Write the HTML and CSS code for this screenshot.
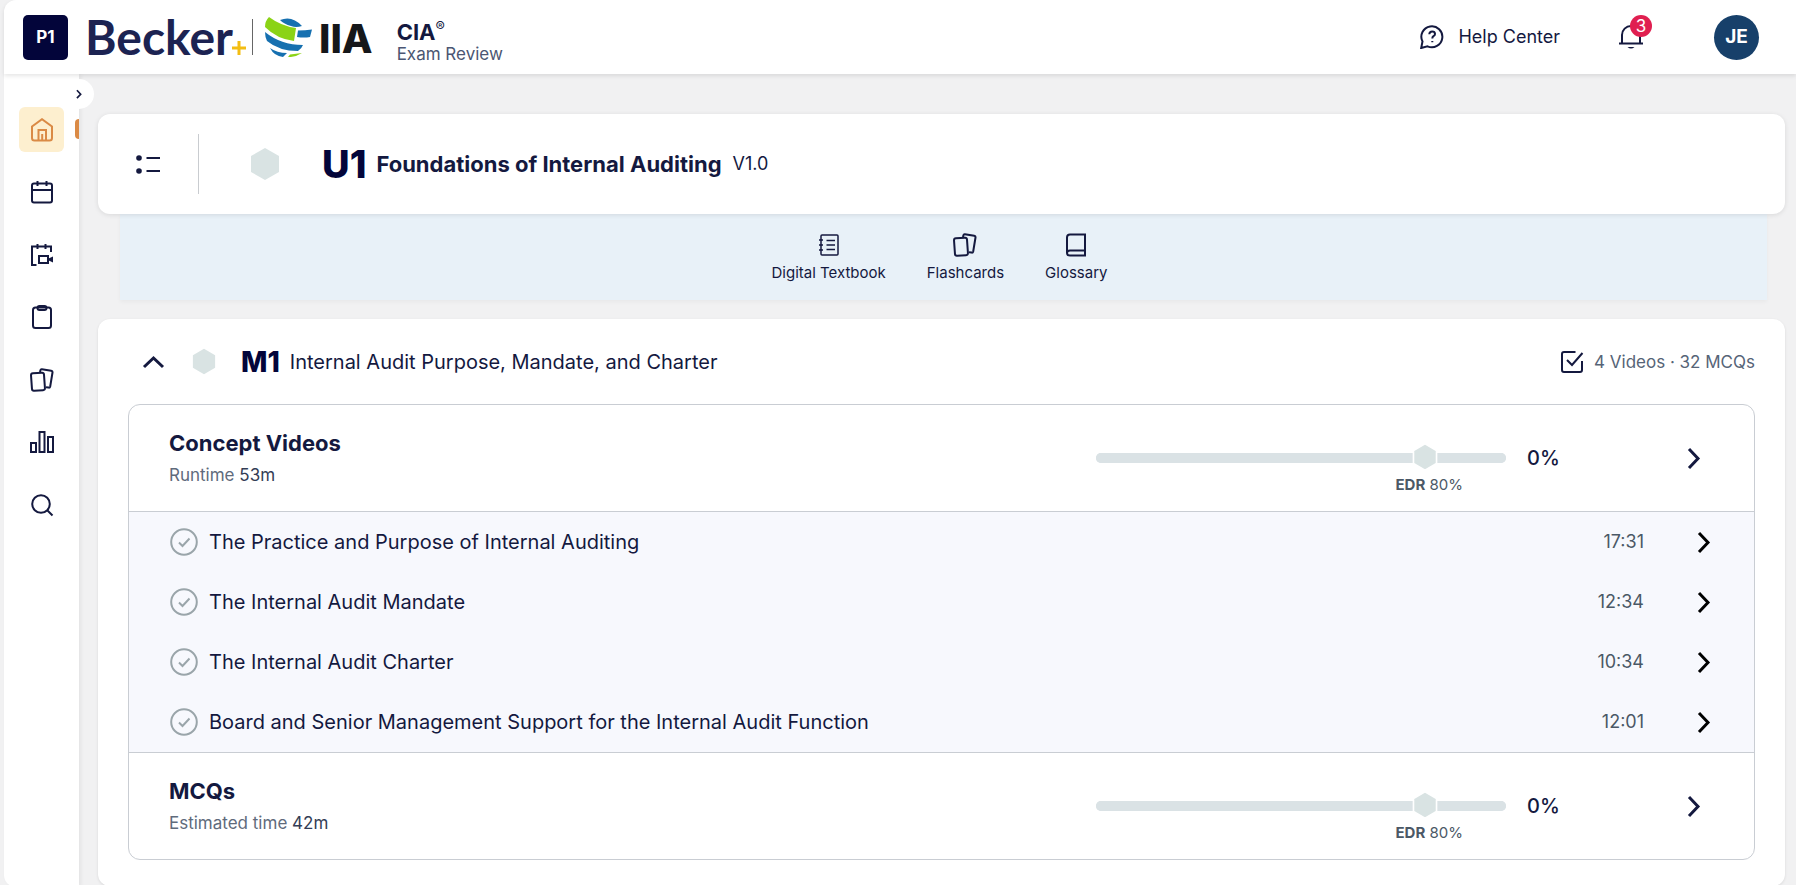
FILE: index.html
```html
<!DOCTYPE html>
<html lang="en">
<head>
  <meta charset="UTF-8">
  <title>U1 Foundations of Internal Auditing</title>
  <meta name="viewport" content="width=device-width, initial-scale=1.0">
  <link rel="stylesheet" href="styles.css">
</head>
<body>
  <!-- shared icons -->
  <svg class="sprite" aria-hidden="true">
    <symbol id="chevron" viewBox="0 0 24 24"><path d="M7 3l9 9.500-9 9.500"/></symbol>
    <symbol id="hex" viewBox="0 0 30 34"><path d="M15 1l14 8v16l-14 8-14-8V9z"/></symbol>
    <symbol id="cards" viewBox="0 0 24 24"><rect x="1.500" y="5" width="13" height="17.500" rx="2" transform="rotate(-4 8 14)"/><path d="M10 4.500l.4-2.200q.3-1.200 1.500-1l9.300 1.500q1.500.3 1.300 1.700l-2.300 14q-.3 1.300-1.600 1.100l-2.600-.3"/></symbol>
    <symbol id="check" viewBox="0 0 28 28"><circle cx="14" cy="14" r="12.800"/><path d="M9 14.500l3.500 3.500 7-7.500"/></symbol>
  </svg>

  <header class="topbar">
    <span class="part">P1</span>
    <a class="becker" href="#">Becker<svg class="spark" viewBox="0 0 14 14"><path d="M7 0v14M0 7h14"/></svg></a>
    <a class="iia" href="#">
      <svg class="globe" viewBox="0 0 48 40" aria-hidden="true">
        <path fill="#1670b0" d="M16 3Q28-2 38 9Q32 11 27 9Q20 7 16 3z"/>
        <path fill="#8bd316" d="M5 0Q17 9 32 11L30 24Q13 22 1 10Q1 4 5 0z"/>
        <path fill="#1670b0" d="M34 13.500Q41 13.500 48 12.500L46 20Q40 21 33 20z"/>
        <path fill="#1670b0" d="M1 15Q17 28 39 28Q38 31 34 34Q15 34 3 24Q1 20 1 15z"/>
        <path fill="#1670b0" d="M6 31Q13 36 23 36L19 40Q10 39 6 31z"/>
        <path fill="#8bd316" d="M26 37.500l12-1.500q-7 4.500-14 4z"/>
      </svg>
      <span>IIA</span>
    </a>
    <div class="exam">
      <strong>CIA<sup>®</sup></strong>
      <span>Exam Review</span>
    </div>
    <a class="help" href="#">
      <svg class="icon" viewBox="0 0 24 24"><path d="M1.200 23l1.300-6.500A10.500 10.500 0 1 1 7.500 21.300z"/><path d="M9.300 9.200q.2-2.700 2.900-2.700t2.800 2.400q0 1.500-1.500 2.300-1.200.8-1.200 2.300M12.300 16v1.200"/></svg>
      Help Center
    </a>
    <button class="bell" aria-label="Notifications">
      <svg class="icon" viewBox="0 0 26 26"><path d="M1 19.500h24M4 19.500V11a9 9 0 0 1 18 0v8.500"/><path d="M9.500 23h7q-3.500 3-7 0z" fill="#14193f" stroke="none"/></svg>
      <span class="badge">3</span>
    </button>
    <button class="avatar">JE</button>
  </header>

  <div class="shell">
    <nav class="sidebar">
      <button class="toggle" aria-label="Expand menu"><svg class="icon" viewBox="0 0 24 24"><use href="#chevron"/></svg></button>
      <div class="menu">
        <a class="active" href="#" aria-label="Home"><svg class="icon" viewBox="0 0 24 24"><path d="M2 8.500L12 1.200l10 7.300V20q0 2.500-2.500 2.500h-15Q2 22.500 2 20z"/><path d="M8.500 22v-10h7.500v10M12.200 16v6"/></svg></a>
        <a href="#" aria-label="Calendar"><svg class="icon" viewBox="0 0 24 24"><rect x="2" y="3.500" width="20" height="19" rx="2"/><path d="M2 10h20M7.500 1v5M16.500 1v5"/></svg></a>
        <a href="#" aria-label="Live classes"><svg class="icon" viewBox="0 0 24 24"><path d="M6.500 22H2V3.500h19V9M7.500 1v5M15.500 1v5"/><path d="M9 13h9v7H9z"/><path d="M19 16.500l3-1.500v3z" fill="#14193f"/></svg></a>
        <a href="#" aria-label="Assignments"><svg class="icon" viewBox="0 0 24 24"><rect x="3" y="2.500" width="18" height="20.500" rx="2.500"/><rect x="7.500" y="1" width="9" height="4" rx="2"/></svg></a>
        <a href="#" aria-label="Flashcards"><svg class="icon" viewBox="0 0 24 24"><use href="#cards"/></svg></a>
        <a href="#" aria-label="Performance"><svg class="icon" viewBox="0 0 24 24"><rect x="1" y="13" width="5" height="9"/><rect x="9.500" y="2" width="5" height="20"/><rect x="18" y="7" width="5" height="15"/></svg></a>
        <a href="#" aria-label="Search"><svg class="icon" viewBox="0 0 24 24"><circle cx="11" cy="11" r="8.800"/><path d="M17.500 17.500l5 5"/></svg></a>
      </div>
    </nav>

    <main>
      <section class="unit">
        <button class="outline" aria-label="Outline"><svg class="icon" viewBox="0 0 24 24"><path d="M10.500 6H24M10.500 19H24"/><circle class="dot" cx="3" cy="6" r="2.800"/><circle class="dot" cx="3" cy="19" r="2.800"/></svg></button>
        <svg class="hex hex-lg"><use href="#hex"/></svg>
        <h1><b>U1</b> <span>Foundations of Internal Auditing</span></h1>
        <span class="version">V1.0</span>
      </section>

      <div class="tools">
        <a href="#"><svg class="icon thin" viewBox="0 0 24 24"><rect x="4" y="2" width="17" height="20" rx="1"/><path d="M2 7h4M2 12h4M2 17h4M9.500 7.500H18M9.500 12H18M9.500 16.500H18"/></svg>Digital Textbook</a>
        <a href="#"><svg class="icon" viewBox="0 0 24 24"><use href="#cards"/></svg>Flashcards</a>
        <a href="#"><svg class="icon" viewBox="0 0 24 24"><path d="M21 17.500H6q-3 0-3 2.500M21 1.500H6Q3 1.500 3 4.500V20q0 2.500 3 2.500h15z"/></svg>Glossary</a>
      </div>

      <section class="module">
        <div class="module-head">
          <button class="collapse" aria-label="Collapse"><svg class="icon" viewBox="0 0 24 24"><use href="#chevron"/></svg></button>
          <svg class="hex hex-md"><use href="#hex"/></svg>
          <h2><b>M1</b> <span>Internal Audit Purpose, Mandate, and Charter</span></h2>
          <div class="counts">
            <svg class="icon" viewBox="0 0 24 24"><path d="M15.500 2H4Q2 2 2 4v16q0 2 2 2h16q2 0 2-2v-9"/><path d="M7 10l5 5L22.500 3"/></svg>
            4 Videos · 32 MCQs
          </div>
        </div>

        <div class="panel">
          <div class="row">
            <div>
              <h3 id="videos">Concept Videos</h3>
              <p>Runtime <span>53m</span></p>
            </div>
            <div class="meter">
              <progress value="0" max="100" aria-labelledby="videos"></progress>
              <svg class="hex hex-sm"><use href="#hex"/></svg>
              <small><b>EDR</b> 80%</small>
            </div>
            <span class="percent">0%</span>
            <a class="go" href="#" aria-label="Open videos"><svg class="icon" viewBox="0 0 24 24"><use href="#chevron"/></svg></a>
          </div>

          <ul class="lessons">
            <li><a href="#"><svg class="tick"><use href="#check"/></svg><span>The Practice and Purpose of Internal Auditing</span><time>17:31</time><svg class="icon" viewBox="0 0 24 24"><use href="#chevron"/></svg></a></li>
            <li><a href="#"><svg class="tick"><use href="#check"/></svg><span>The Internal Audit Mandate</span><time>12:34</time><svg class="icon" viewBox="0 0 24 24"><use href="#chevron"/></svg></a></li>
            <li><a href="#"><svg class="tick"><use href="#check"/></svg><span>The Internal Audit Charter</span><time>10:34</time><svg class="icon" viewBox="0 0 24 24"><use href="#chevron"/></svg></a></li>
            <li><a href="#"><svg class="tick"><use href="#check"/></svg><span>Board and Senior Management Support for the Internal Audit Function</span><time>12:01</time><svg class="icon" viewBox="0 0 24 24"><use href="#chevron"/></svg></a></li>
          </ul>

          <div class="row">
            <div>
              <h3 id="mcqs">MCQs</h3>
              <p>Estimated time <span>42m</span></p>
            </div>
            <div class="meter">
              <progress value="0" max="100" aria-labelledby="mcqs"></progress>
              <svg class="hex hex-sm"><use href="#hex"/></svg>
              <small><b>EDR</b> 80%</small>
            </div>
            <span class="percent">0%</span>
            <a class="go" href="#" aria-label="Open MCQs"><svg class="icon" viewBox="0 0 24 24"><use href="#chevron"/></svg></a>
          </div>
        </div>
      </section>
    </main>
  </div>
</body>
</html>
```

FILE: styles.css
```css
* {
  box-sizing: border-box;
}

body {
  margin: 0;
  padding-left: 4px;
  background: #f1f1f2;
  color: #14193f;
  font-family: Inter, "Liberation Sans", sans-serif;
  font-size: 18px;
  line-height: 24px;
}

a {
  color: inherit;
  text-decoration: none;
}

button {
  padding: 0;
  border: none;
  background: none;
  color: inherit;
  font: inherit;
  cursor: pointer;
}

h1, h2, h3, p, ul {
  margin: 0;
  padding: 0;
}

.sprite {
  position: absolute;
  width: 0;
  height: 0;
}

.icon {
  display: block;
  flex: none;
  width: 24px;
  height: 24px;
  fill: none;
  stroke: currentColor;
  stroke-width: 2;
}

.hex {
  flex: none;
  fill: #d9e3e3;
}

/* top bar */
.topbar {
  position: relative;
  z-index: 2;
  display: flex;
  align-items: center;
  height: 74px;
  padding: 0 37px 0 19px;
  background: #fff;
  border-top-left-radius: 12px;
  box-shadow: 0 2px 4px rgba(0, 0, 0, 0.1);
}

.part {
  width: 45px;
  height: 45px;
  margin-right: 17px;
  border-radius: 5px;
  background: #03053a;
  color: #fff;
  font-size: 17px;
  font-weight: 700;
  line-height: 45px;
  text-align: center;
}

.becker {
  position: relative;
  width: 168px;
  border-right: 1px solid #666;
  color: #1c2352;
  font-family: Lato, sans-serif;
  font-size: 48px;
  font-weight: 700;
  line-height: 36px;
}

.spark {
  position: absolute;
  right: 6px;
  bottom: 0;
  width: 14px;
  height: 14px;
  stroke: #f3bd13;
  stroke-width: 3;
}

.iia {
  display: flex;
  align-items: center;
  gap: 7px;
  margin-left: 11px;
  color: #15171a;
  font-size: 40px;
  font-weight: 800;
  line-height: 40px;
}

.iia span {
  padding-top: 4px;
}

.globe {
  width: 48px;
  height: 40px;
}

.exam {
  display: flex;
  flex-direction: column;
  margin-left: 24px;
  padding-top: 12px;
  color: #4b5673;
  font-size: 17px;
  line-height: 22px;
}

.exam strong {
  color: #14193f;
  font-size: 22px;
}

.exam sup {
  font-size: 14px;
  font-weight: 400;
  line-height: 0;
}

.help {
  display: flex;
  align-items: center;
  gap: 14px;
  margin-left: auto;
}

.bell {
  position: relative;
  margin-left: 58px;
}

.bell .icon {
  width: 26px;
  height: 26px;
}

.badge {
  position: absolute;
  top: -9px;
  right: -8px;
  width: 22px;
  height: 22px;
  border-radius: 50%;
  background: #e01f50;
  color: #fff;
  font-size: 17px;
  line-height: 22px;
}

.avatar {
  width: 45px;
  height: 45px;
  margin-left: 70px;
  border-radius: 50%;
  background: #17406a;
  color: #fff;
  font-size: 19px;
  font-weight: 700;
}

.shell {
  display: flex;
}

/* side navigation */
.sidebar {
  position: relative;
  flex: none;
  width: 75px;
  padding: 33px 15px;
  background: #fff;
  border-bottom-left-radius: 12px;
  box-shadow: 2px 0 4px rgba(0, 0, 0, 0.06);
}

.menu {
  display: flex;
  flex-direction: column;
  justify-content: space-between;
  height: 420px;
}

.menu a {
  display: grid;
  place-items: center;
  width: 45px;
  height: 45px;
  border-radius: 6px;
}

.menu .active {
  background: #fdefcf;
  color: #da8a45;
}

.menu .active::after {
  content: "";
  position: absolute;
  top: 45px;
  right: 0;
  width: 4px;
  height: 20px;
  border-radius: 4px 0 0 4px;
  background: #da8a45;
}

.toggle {
  position: absolute;
  top: 5px;
  right: -15px;
  display: grid;
  place-items: center;
  width: 30px;
  height: 30px;
  border-radius: 50%;
  background: #fff;
}

.toggle .icon {
  width: 10px;
  height: 10px;
  stroke-width: 4;
}

main {
  flex: 1;
  padding: 40px 11px 1px 19px;
}

/* unit header */
.unit {
  position: relative;
  z-index: 1;
  display: flex;
  align-items: center;
  height: 100px;
  padding-left: 38px;
  background: #fff;
  border-radius: 12px;
  box-shadow: 0 1px 5px rgba(0, 0, 0, 0.1);
}

.outline {
  display: flex;
  align-items: center;
  width: 63px;
  height: 60px;
  border-right: 1px solid #c9ccd0;
}

.dot {
  fill: currentColor;
  stroke: none;
}

.hex-lg {
  width: 30px;
  height: 34px;
  margin-left: 51px;
}

h1, h2 {
  display: flex;
  align-items: center;
}

h1 {
  gap: 10px;
  margin-left: 42px;
  font-size: 22px;
  font-weight: 700;
}

h1 b {
  color: #03053a;
  font-size: 38px;
  font-weight: 800;
}

.version {
  margin-left: 11px;
}

/* study tools */
.tools {
  display: flex;
  justify-content: center;
  gap: 41px;
  height: 86px;
  margin: 0 18px 19px 22px;
  padding: 19px 8px 0 0;
  background: #e8f1f8;
  box-shadow: 0 2px 4px rgba(0, 0, 0, 0.04);
  font-size: 15px;
  line-height: 20px;
}

.tools a {
  display: flex;
  flex-direction: column;
  align-items: center;
  gap: 6px;
}

.thin {
  stroke-width: 1.5;
}

/* module */
.module {
  padding: 0 30px 26px;
  background: #fff;
  border-radius: 12px;
  box-shadow: 0 1px 3px rgba(0, 0, 0, 0.1);
}

.module-head {
  display: flex;
  align-items: center;
  height: 85px;
  padding-left: 13px;
}

.collapse .icon {
  transform: rotate(-90deg);
  stroke-width: 3;
}

.hex-md {
  width: 24px;
  height: 27px;
  margin-left: 27px;
}

h2 {
  gap: 10px;
  margin-left: 25px;
  font-size: 20px;
  font-weight: 400;
}

h2 b {
  color: #03053a;
  font-size: 28px;
  font-weight: 800;
}

.counts {
  display: flex;
  align-items: center;
  gap: 10px;
  margin-left: auto;
  color: #566477;
  font-size: 17px;
}

.counts .icon {
  color: #14193f;
}

.panel {
  border: 1px solid #c9cdd3;
  border-radius: 12px;
  overflow: hidden;
}

.row {
  display: grid;
  grid-template-columns: 1fr 410px 134px 24px;
  align-items: center;
  column-gap: 21px;
  height: 106px;
  padding: 0 48px 0 40px;
}

h3 {
  margin-bottom: 6px;
  font-size: 22px;
  line-height: 28px;
}

.row p {
  color: #5f6b7c;
  font-size: 17px;
}

.row p span {
  color: #333d55;
}

.meter {
  position: relative;
}

progress {
  display: block;
  width: 100%;
  height: 10px;
  border: none;
  border-radius: 5px;
  background: #dae2e5;
  appearance: none;
}

progress::-webkit-progress-bar {
  border-radius: 5px;
  background: #dae2e5;
}

.hex-sm {
  position: absolute;
  top: -10px;
  left: 80%;
  width: 26px;
  height: 28px;
  margin-left: -12px;
  overflow: visible;
  stroke: #fff;
  stroke-width: 2;
}

.meter small {
  position: absolute;
  top: 20px;
  right: 43px;
  color: #4b5866;
  font-size: 15px;
}

.percent {
  font-size: 20px;
  font-weight: 500;
}

.go .icon, .lessons .icon {
  stroke-width: 3;
}

.lessons {
  border: solid #c9cdd3;
  border-width: 1px 0;
  background: #f7f8fd;
  list-style: none;
}

.lessons a {
  display: flex;
  align-items: center;
  height: 60px;
  padding: 0 38px 0 41px;
  font-size: 20px;
}

.tick {
  width: 28px;
  height: 28px;
  margin-right: 11px;
  fill: none;
  stroke: #9aa5aa;
  stroke-width: 2;
}

.lessons time {
  margin-left: auto;
  color: #4b5866;
  font-size: 18px;
}

.lessons .icon {
  margin-left: 48px;
  color: #000;
}
```
